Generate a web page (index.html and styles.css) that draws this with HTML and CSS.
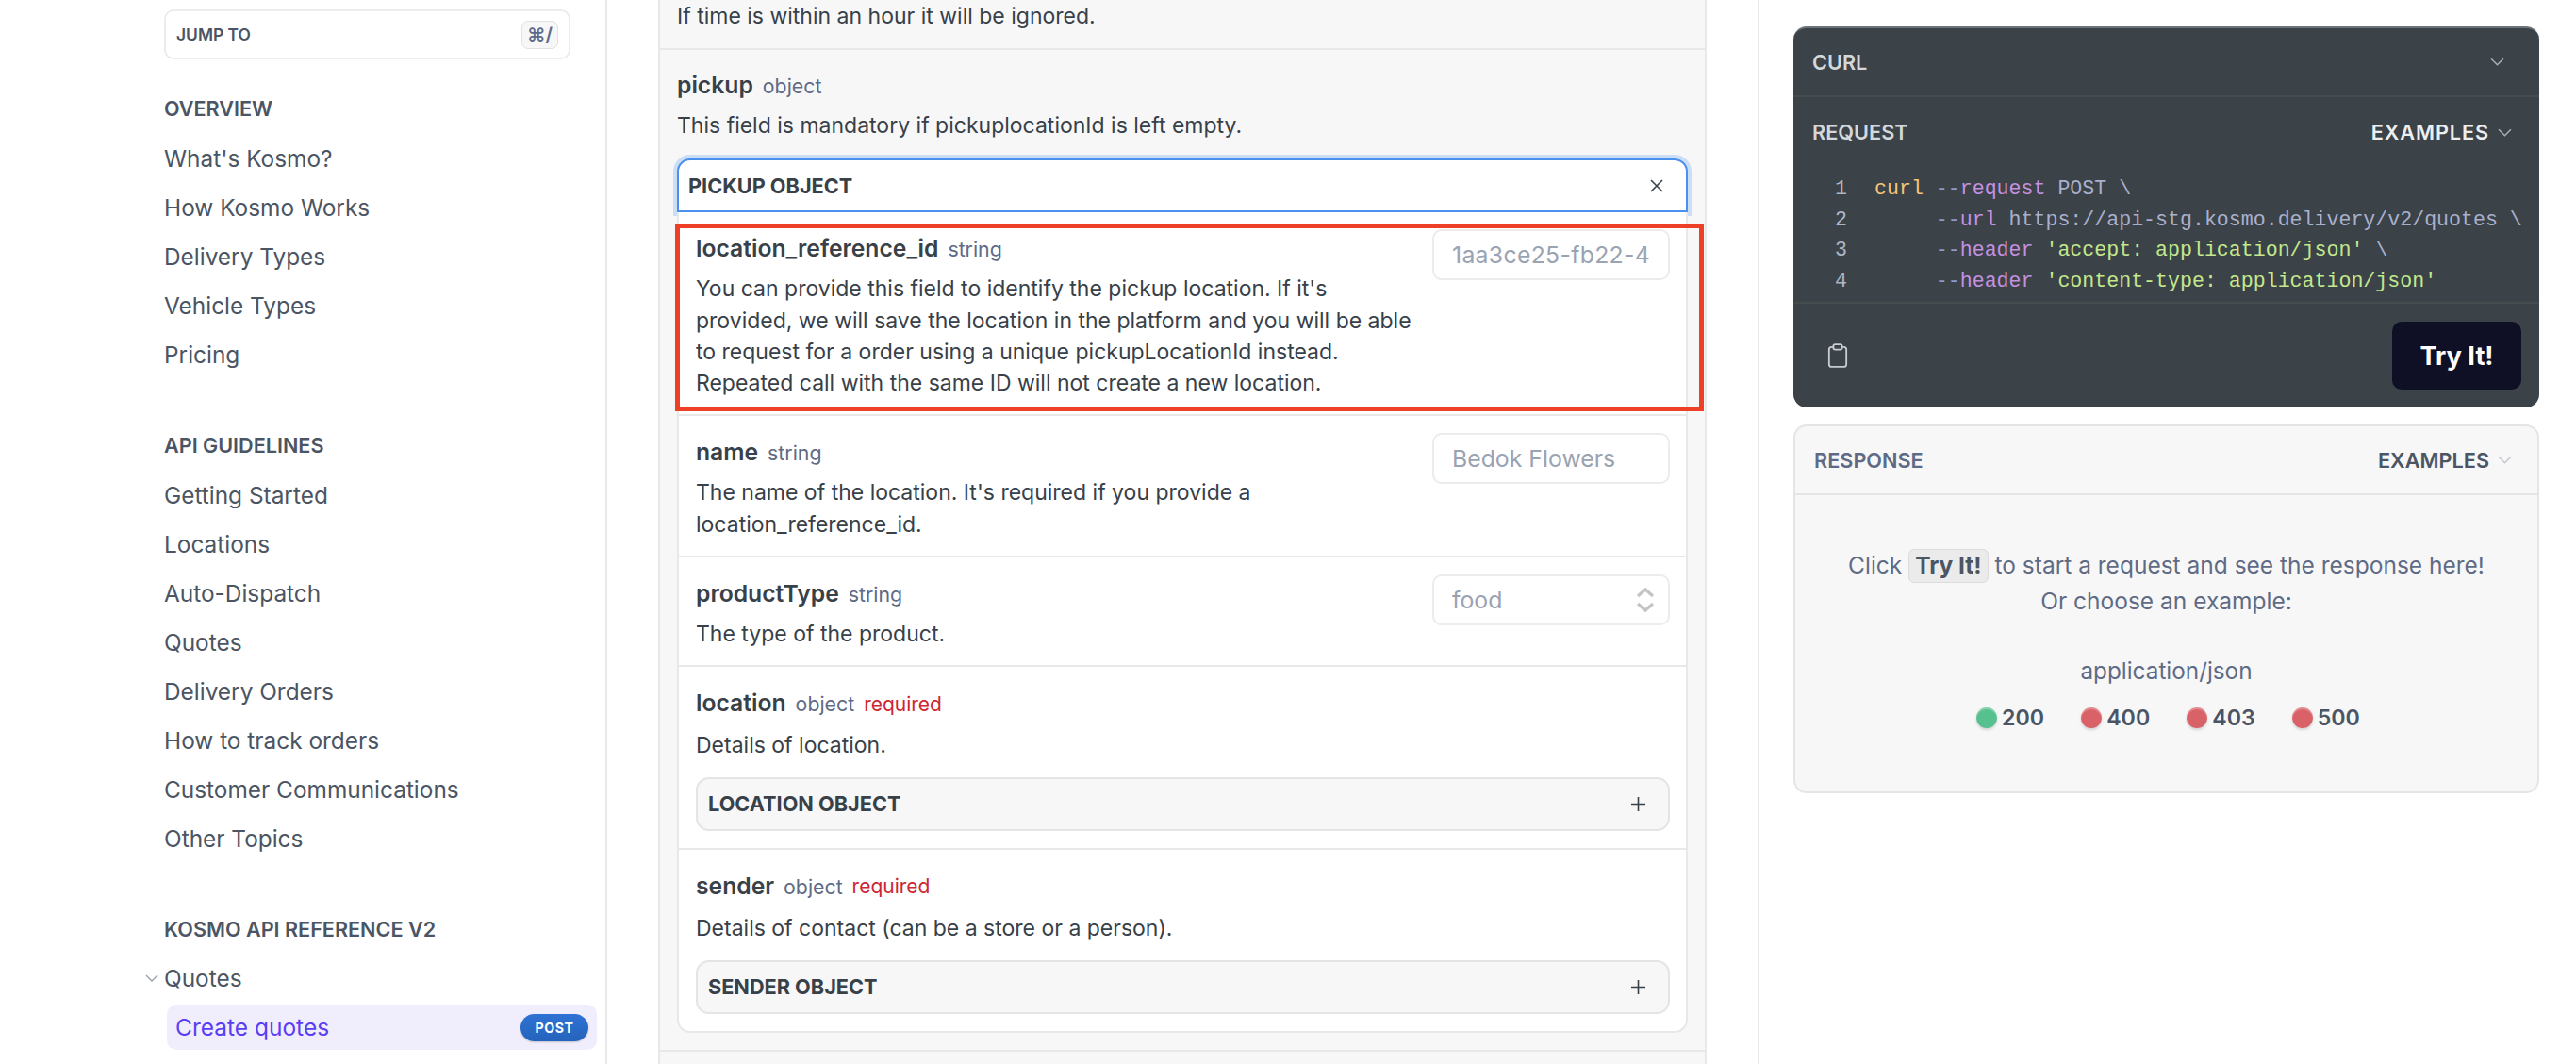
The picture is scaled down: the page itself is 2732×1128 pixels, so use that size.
FILE: index.html
```html
<!DOCTYPE html>
<html>
<head>
    <title>Create quotes</title>
    <link rel="stylesheet" href="styles.css">
</head>
<body>
    <div class="page">
        <aside class="sidebar">
            <div class="jump">
                <span>JUMP TO</span>
                <span class="jump-key">⌘/</span>
            </div>

            <h3 class="nav-heading">OVERVIEW</h3>
            <a class="nav-item">What's Kosmo?</a>
            <a class="nav-item">How Kosmo Works</a>
            <a class="nav-item">Delivery Types</a>
            <a class="nav-item">Vehicle Types</a>
            <a class="nav-item">Pricing</a>

            <h3 class="nav-heading">API GUIDELINES</h3>
            <a class="nav-item">Getting Started</a>
            <a class="nav-item">Locations</a>
            <a class="nav-item">Auto-Dispatch</a>
            <a class="nav-item">Quotes</a>
            <a class="nav-item">Delivery Orders</a>
            <a class="nav-item">How to track orders</a>
            <a class="nav-item">Customer Communications</a>
            <a class="nav-item">Other Topics</a>

            <h3 class="nav-heading">KOSMO API REFERENCE V2</h3>
            <a class="nav-item nav-parent">
                <svg class="nav-chevron" viewBox="0 0 14 8" fill="none" stroke="#9aa1a9" stroke-width="1.4"><path d="M1 1l6 6 6-6"/></svg>
                Quotes
            </a>
            <a class="nav-active">
                <span>Create quotes</span>
                <span class="post-badge">POST</span>
            </a>
        </aside>

        <main class="content">
            <div class="params">
                <div class="param-top">If time is within an hour it will be ignored.</div>

                <div class="param-pickup">
                    <div class="title-line">
                        <span class="name">pickup</span>
                        <span class="type">object</span>
                    </div>
                    <p class="desc">This field is mandatory if pickuplocationId is left empty.</p>

                    <div class="object-open">
                        <span>PICKUP OBJECT</span>
                        <svg class="icon-close" viewBox="0 0 14 14" fill="none" stroke="#384048" stroke-width="1.6"><path d="M1 1l12 12M13 1L1 13"/></svg>
                    </div>

                    <div class="panel">
                        <div class="row">
                            <div class="annotation"></div>
                            <div class="row-text">
                                <div class="title-line">
                                    <span class="name">location_reference_id</span>
                                    <span class="type">string</span>
                                </div>
                                <p class="desc">You can provide this field to identify the pickup location. If it's provided, we will save the location in the platform and you will be able to request for a order using a unique pickupLocationId instead. Repeated call with the same ID will not create a new location.</p>
                            </div>
                            <input class="field field-id" placeholder="1aa3ce25-fb22-4f0c">
                        </div>

                        <div class="row">
                            <div class="row-text">
                                <div class="title-line">
                                    <span class="name">name</span>
                                    <span class="type">string</span>
                                </div>
                                <p class="desc">The name of the location. It's required if you provide a location_reference_id.</p>
                            </div>
                            <input class="field" placeholder="Bedok Flowers">
                        </div>

                        <div class="row">
                            <div class="row-text">
                                <div class="title-line">
                                    <span class="name">productType</span>
                                    <span class="type">string</span>
                                </div>
                                <p class="desc">The type of the product.</p>
                            </div>
                            <div class="field field-select">
                                <span>food</span>
                                <svg class="icon-updown" viewBox="0 0 20 28" fill="none" stroke="#c4c4c4" stroke-width="3.2"><path d="M2 10l8-7 8 7M2 18l8 7 8-7"/></svg>
                            </div>
                        </div>

                        <div class="row row-object">
                            <div class="title-line">
                                <span class="name">location</span>
                                <span class="type">object</span>
                                <span class="required">required</span>
                            </div>
                            <p class="desc">Details of location.</p>
                            <div class="object-closed">
                                <span>LOCATION OBJECT</span>
                                <svg class="icon-plus" viewBox="0 0 15 15" fill="none" stroke="#384048" stroke-width="1.6"><path d="M7.5 0v15M0 7.5h15"/></svg>
                            </div>
                        </div>

                        <div class="row row-object row-last">
                            <div class="title-line">
                                <span class="name">sender</span>
                                <span class="type">object</span>
                                <span class="required">required</span>
                            </div>
                            <p class="desc">Details of contact (can be a store or a person).</p>
                            <div class="object-closed">
                                <span>SENDER OBJECT</span>
                                <svg class="icon-plus" viewBox="0 0 15 15" fill="none" stroke="#384048" stroke-width="1.6"><path d="M7.5 0v15M0 7.5h15"/></svg>
                            </div>
                        </div>
                    </div>
                </div>
            </div>
        </main>

        <section class="side">
            <div class="code-card">
                <div class="code-lang">
                    <span>CURL</span>
                    <svg class="chevron" viewBox="0 0 14 8" fill="none" stroke="#aab0b6" stroke-width="1.4"><path d="M1 1l6 6 6-6"/></svg>
                </div>
                <div class="code-head">
                    <span>REQUEST</span>
                    <span class="examples examples-dark">EXAMPLES
                        <svg class="chevron" viewBox="0 0 14 8" fill="none" stroke="#aab0b6" stroke-width="1.4"><path d="M1 1l6 6 6-6"/></svg>
                    </span>
                </div>
                <div class="code-body">
                    <div class="code-line"><span class="ln">1</span><span class="c-cmd">curl</span> <span class="c-dash">--</span><span class="c-flag">request</span> POST \</div>
                    <div class="code-line"><span class="ln">2</span>     <span class="c-dash">--</span><span class="c-flag">url</span> https://api-stg.kosmo.delivery/v2/quotes \</div>
                    <div class="code-line"><span class="ln">3</span>     <span class="c-dash">--</span><span class="c-flag">header</span> <span class="c-str">'accept: application/json'</span> \</div>
                    <div class="code-line"><span class="ln">4</span>     <span class="c-dash">--</span><span class="c-flag">header</span> <span class="c-str">'content-type: application/json'</span></div>
                </div>
                <div class="code-foot">
                    <svg class="icon-clip" viewBox="0 0 24 28" fill="none" stroke="#c9cdd1" stroke-width="2"><rect x="2" y="4" width="20" height="23" rx="3"/><rect x="7" y="1" width="10" height="6" rx="2" fill="#3b4248"/></svg>
                    <button class="try-btn">Try It!</button>
                </div>
            </div>

            <div class="response-card">
                <div class="response-head">
                    <span class="response-title">RESPONSE</span>
                    <span class="examples examples-light">EXAMPLES
                        <svg class="chevron" viewBox="0 0 14 8" fill="none" stroke="#c3c8cf" stroke-width="1.4"><path d="M1 1l6 6 6-6"/></svg>
                    </span>
                </div>
                <div class="response-body">
                    <p class="hint">Click <span class="hint-key">Try It!</span> to start a request and see the response here!</p>
                    <p class="hint">Or choose an example:</p>
                    <p class="mime">application/json</p>
                    <div class="statuses">
                        <span class="status"><i class="dot dot-ok"></i>200</span>
                        <span class="status"><i class="dot dot-err"></i>400</span>
                        <span class="status"><i class="dot dot-err"></i>403</span>
                        <span class="status"><i class="dot dot-err"></i>500</span>
                    </div>
                </div>
            </div>
        </section>
    </div>
</body>
</html>
```
FILE: styles.css
```css
* {
    box-sizing: border-box;
}
body {
    margin: 0;
    background: #fff;
    font-family: Inter, "Noto Sans", sans-serif;
    color: #384048;
    overflow: hidden;
}
p, h3 {
    margin: 0;
}
.page {
    display: flex;
    height: 1128px;
    overflow: hidden;
}

/* sidebar */
.sidebar {
    width: 644px;
    flex: none;
    border-right: 2px solid #e8e8e8;
    padding: 10px 0 0 174px;
    color: #4b5563;
}
.jump {
    width: 431px;
    height: 53px;
    border: 2px solid #ececec;
    border-radius: 10px;
    display: flex;
    align-items: center;
    justify-content: space-between;
    padding: 0 11px;
    font-size: 17.4px;
    font-weight: 600;
}
.jump-key {
    width: 39px;
    height: 30px;
    border: 1px solid #e2e2e2;
    border-radius: 7px;
    background: #f7f7f8;
    color: #5f6b85;
    font-size: 20px;
    display: flex;
    align-items: center;
    justify-content: center;
}
.nav-heading {
    height: 30px;
    line-height: 30px;
    margin-top: 55px;
    margin-bottom: 12px;
    font-size: 21.6px;
    font-weight: 600;
}
.jump + .nav-heading {
    margin-top: 37px;
}
.nav-item {
    display: flex;
    align-items: center;
    height: 52px;
    font-size: 24.4px;
}
.nav-chevron {
    width: 14px;
    height: 8px;
    margin-left: -20px;
    margin-right: 6px;
}
.nav-parent {
    height: 50px;
}
.nav-active {
    width: 456px;
    height: 48px;
    margin: 3px 0 0 3px;
    padding: 0 9px;
    border-radius: 10px;
    background: #f0eefc;
    color: #5b3df5;
    font-size: 24.5px;
    display: flex;
    align-items: center;
    justify-content: space-between;
}
.post-badge {
    width: 72px;
    height: 29px;
    border-radius: 15px;
    background: linear-gradient(#2f72d4, #2563bb);
    box-shadow: 0 1px 2px rgba(0,0,0,0.2);
    color: #fff;
    font-size: 14.2px;
    font-weight: 700;
    letter-spacing: 0.5px;
    display: flex;
    align-items: center;
    justify-content: center;
}

/* center column */
.content {
    width: 1222px;
    flex: none;
    border-right: 2px solid #e8e8e8;
    padding-left: 54px;
}
.params {
    width: 1112px;
    height: 1128px;
    background: #f7f7f8;
    border-left: 2px solid #e8e8e8;
    border-right: 2px solid #e8e8e8;
}
.param-top {
    height: 53px;
    padding: 0 18px;
    border-bottom: 2px solid #e8e8e8;
    font-size: 23px;
    line-height: 34px;
}
.param-pickup {
    padding: 17px 18px 18px;
    border-bottom: 2px solid #e8e8e8;
}
.title-line {
    display: flex;
    align-items: center;
    gap: 10px;
    height: 40px;
}
.name {
    font-size: 24.7px;
    font-weight: 600;
}
.type {
    font-size: 21.3px;
    color: #5f6b85;
    padding-top: 2px;
}
.required {
    font-size: 21px;
    color: #cc2733;
    padding-top: 2px;
}
.desc {
    margin-top: 7px;
    font-size: 23px;
    line-height: 33.25px;
}
.object-open {
    height: 57px;
    margin-top: 18px;
    padding: 0 24px 0 10px;
    background: #fff;
    border: 2px solid #4a90ee;
    border-radius: 14px 14px 0 0;
    box-shadow: 0 0 0 4px rgba(74,144,238,0.25);
    display: flex;
    align-items: center;
    justify-content: space-between;
    font-size: 21.7px;
    font-weight: 700;
}
.icon-close {
    width: 14px;
    height: 14px;
}
.panel {
    background: #fff;
    border: 2px solid #e8e8e8;
    border-top: 0;
    border-radius: 0 0 14px 14px;
}
.row {
    position: relative;
    display: flex;
    justify-content: space-between;
    gap: 20px;
    padding: 18px 17px 16px 18px;
    border-bottom: 2px solid #e8e8e8;
}
.row-object {
    display: block;
    padding-bottom: 18px;
}
.row-object .desc {
    margin-top: 9px;
}
.row-last {
    border-bottom: 0;
}
.row-text {
    flex: 1;
}
.annotation {
    position: absolute;
    left: -4px;
    top: 12px;
    width: 1091px;
    height: 199px;
    border: 5px solid #ee4027;
    pointer-events: none;
}
.field {
    width: 252px;
    height: 54px;
    flex: none;
    padding: 0 20px 0 19px;
    border: 2px solid #ececec;
    border-radius: 10px;
    background: #fff;
    font-family: inherit;
    font-size: 24.8px;
    color: #9aa3b2;
}
.field::placeholder {
    color: #9aa3b2;
    opacity: 1;
}
.field-id {
    letter-spacing: 0.3px;
}
.field-select {
    display: flex;
    align-items: center;
    justify-content: space-between;
    padding-right: 14px;
}
.icon-updown {
    width: 20px;
    height: 28px;
}
.object-closed {
    height: 57px;
    margin-top: 16.5px;
    padding: 0 24px 0 11px;
    background: #f7f7f8;
    border: 2px solid #e4e4e4;
    border-radius: 14px;
    display: flex;
    align-items: center;
    justify-content: space-between;
    font-size: 21.7px;
    font-weight: 700;
}
.icon-plus {
    width: 15px;
    height: 15px;
}

/* right column */
.side {
    flex: 1;
    padding: 28px 39px 0 36px;
}
.code-card {
    height: 404px;
    background: #3b4248;
    border-top: 2px solid #6b7478;
    border-radius: 14px;
    color: #d5d8da;
    font-size: 21.7px;
    font-weight: 600;
}
.chevron {
    width: 15px;
    height: 9px;
}
.examples {
    display: flex;
    align-items: center;
    gap: 9px;
}
.code-lang {
    height: 73px;
    padding: 0 37px 0 20px;
    border-bottom: 2px solid #454c4e;
    display: flex;
    align-items: center;
    justify-content: space-between;
}
.code-head {
    height: 74px;
    padding: 0 29px 0 20px;
    display: flex;
    align-items: center;
    justify-content: space-between;
}
.examples-dark {
    color: #eceeef;
    letter-spacing: 0.9px;
}
.code-body {
    height: 145px;
    padding-top: 7px;
    border-bottom: 2px solid #454c4e;
    font-family: "Liberation Mono", monospace;
    font-size: 21.6px;
    font-weight: 400;
    line-height: 32.5px;
    color: #a9b0cc;
}
.code-line {
    white-space: pre;
    overflow: hidden;
}
.ln {
    display: inline-block;
    width: 57px;
    margin-right: 29px;
    text-align: right;
    color: #aeb4c4;
}
.c-cmd { color: #f5c578; }
.c-dash { color: #8f9ac7; }
.c-flag { color: #c391e0; }
.c-str { color: #c3e88d; }
.code-foot {
    height: 110px;
    padding: 0 19px 0 36px;
    display: flex;
    align-items: center;
    justify-content: space-between;
}
.icon-clip {
    width: 22px;
    height: 26px;
}
.try-btn {
    width: 137px;
    height: 72px;
    border: none;
    border-radius: 10px;
    background: #0f1026;
    color: #fff;
    font-family: inherit;
    font-size: 27.2px;
    font-weight: 700;
}
.response-card {
    height: 391px;
    margin-top: 18px;
    background: #f7f7f8;
    border: 2px solid #e5e5e5;
    border-radius: 14px;
}
.response-head {
    height: 73px;
    padding: 0 27px 0 20px;
    border-bottom: 2px solid #e5e5e5;
    display: flex;
    align-items: center;
    justify-content: space-between;
    font-size: 21.7px;
    font-weight: 600;
}
.response-title {
    color: #5f6b85;
}
.examples-light {
    color: #4b5563;
}
.response-body {
    text-align: center;
    padding-top: 55px;
    color: #5f6b85;
    font-size: 24.5px;
}
.hint {
    line-height: 38px;
}
.hint-key {
    display: inline-block;
    height: 36px;
    line-height: 32px;
    padding: 0 6px;
    background: #ebebec;
    border: 1px solid #dcdcdc;
    border-radius: 6px;
    color: #4b5563;
    font-weight: 700;
}
.mime {
    margin-top: 36px;
    line-height: 38px;
    font-size: 24.3px;
}
.statuses {
    margin-top: 17px;
    padding-left: 4px;
    display: flex;
    justify-content: center;
    gap: 39px;
}
.status {
    display: flex;
    align-items: center;
    gap: 5px;
    color: #4b5563;
    font-size: 23.2px;
    font-weight: 600;
}
.dot {
    width: 22px;
    height: 22px;
    border-radius: 50%;
    box-shadow: 0 2px 3px rgba(0,0,0,0.15), inset 0 2px 1px rgba(255,255,255,0.3);
}
.dot-ok { background: #57c08f; }
.dot-err { background: #d96268; }
```
